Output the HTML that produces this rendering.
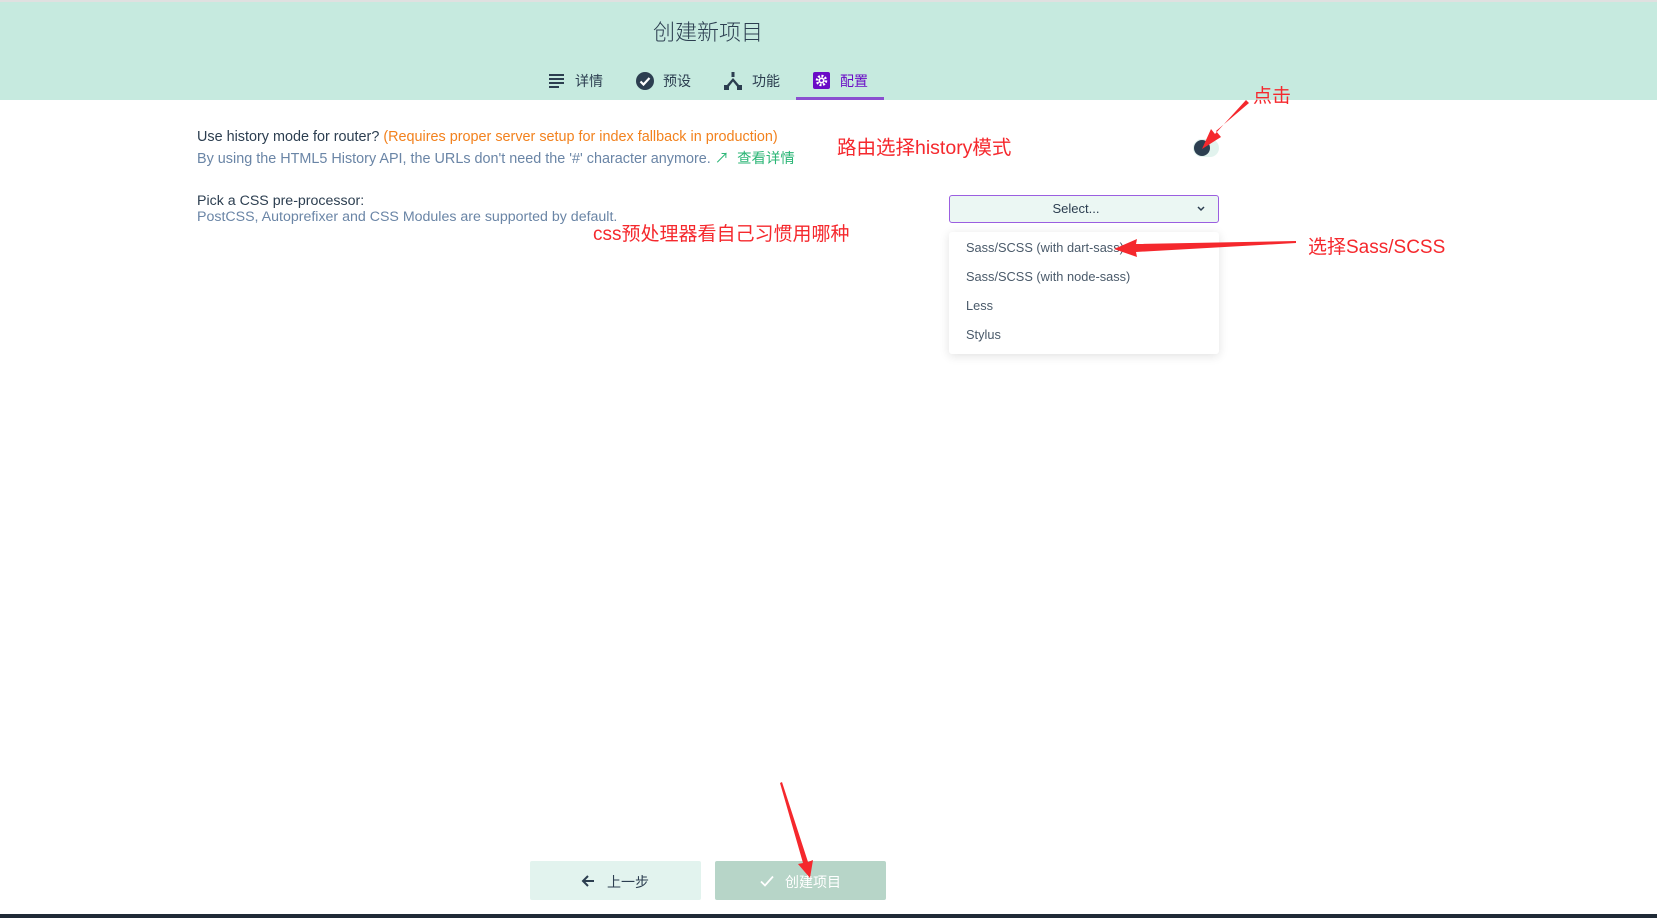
<!DOCTYPE html>
<html><head><meta charset="utf-8"><style>
*{margin:0;padding:0;box-sizing:border-box}
body{width:1657px;height:918px;position:relative;background:#fff;font-family:"Liberation Sans","Noto Sans CJK SC",sans-serif;overflow:hidden;color:#2c3e50}
.abs{position:absolute;white-space:nowrap}
#top{position:absolute;left:0;top:0;width:1657px;height:2px;background:#e0e0e0}
#hdr{position:absolute;left:0;top:2px;width:1657px;height:98px;background:#c6eadf}
.tab{position:absolute;top:72px;font-size:14px;color:#2c3e50;line-height:18px}
.red{color:#f5282d;font-size:19px;position:absolute;white-space:nowrap;line-height:22px}
</style></head><body>
<div id="top"></div>
<div id="hdr"></div>
<div class="abs" style="left:653px;top:15px;font-size:22px;color:#2c3e50;font-weight:300">创建新项目</div>

<svg class="abs" style="left:548px;top:73px" width="18" height="16" viewBox="0 0 18 16"><g fill="#2c3e50"><rect x="1" y="1" width="15" height="2"/><rect x="1" y="5" width="15" height="2"/><rect x="1" y="9" width="15" height="2"/><rect x="1" y="13" width="10" height="2"/></g></svg>
<div class="tab" style="left:575px">详情</div>
<svg class="abs" style="left:635px;top:71px" width="20" height="20" viewBox="0 0 20 20"><circle cx="10" cy="10" r="9" fill="#2c3e50"/><path d="M5.5 10.5l3 3 6-6.5" stroke="#fff" stroke-width="2.2" fill="none"/></svg>
<div class="tab" style="left:663px">预设</div>
<svg class="abs" style="left:723px;top:71px" width="20" height="20" viewBox="0 0 20 20"><g fill="#2c3e50"><rect x="8.5" y="1" width="3" height="5"/><path d="M10 7 L4 14 L6 15.5 L10 10.5 L14 15.5 L16 14 Z"/><rect x="1" y="14" width="5" height="5"/><rect x="14" y="14" width="5" height="5"/></g></svg>
<div class="tab" style="left:752px">功能</div>
<svg class="abs" style="left:813px;top:72px" width="17" height="17" viewBox="0 0 17 17"><rect width="17" height="17" rx="2" fill="#6a0bc6"/><circle cx="8.5" cy="8.5" r="4.5" fill="none" stroke="#fff" stroke-width="2.5" stroke-dasharray="2 1.5"/><circle cx="8.5" cy="8.5" r="3" fill="#fff"/><circle cx="8.5" cy="8.5" r="1.4" fill="#6a0bc6"/></svg>
<div class="tab" style="left:840px;color:#6a0bc6">配置</div>
<div class="abs" style="left:796px;top:97px;width:88px;height:3px;background:#8b4fd0"></div>

<div class="abs" style="left:197px;top:129px;font-size:14.4px;color:#2c3e50">Use history mode for router? <span style="color:#f2811d">(Requires proper server setup for index fallback in production)</span></div>
<div class="abs" style="left:197px;top:147px;font-size:14.4px;color:#6a85a6">By using the HTML5 History API, the URLs don't need the '#' character anymore. <span style="color:#2bb676">&#x2197;&#xFE0E;&nbsp; 查看详情</span></div>
<div class="abs" style="left:197px;top:193px;font-size:14.2px;color:#2c3e50">Pick a CSS pre-processor:</div>
<div class="abs" style="left:197px;top:209px;font-size:14.2px;color:#6a85a6">PostCSS, Autoprefixer and CSS Modules are supported by default.</div>

<div class="abs" style="left:1193px;top:139px;width:26px;height:18px;border-radius:9px;background:#e2f3ee"></div>
<div class="abs" style="left:1194px;top:140px;width:16px;height:16px;border-radius:50%;background:#2c3e50"></div>

<div class="abs" style="left:949px;top:195px;width:270px;height:28px;border:1.5px solid #9b5fe0;border-radius:3px;background:#ebf7f3;font-size:13px;text-align:center;line-height:25px;color:#2c3e50;padding-right:16px">Select...</div>
<svg class="abs" style="left:1196px;top:205px" width="10" height="8" viewBox="0 0 10 8"><path d="M2 2l3 3 3-3" stroke="#2c3e50" stroke-width="1.5" fill="none"/></svg>
<div class="abs" style="left:949px;top:232px;width:270px;height:122px;background:#fff;border-radius:3px;box-shadow:0 2px 10px rgba(0,0,0,.12)"></div>
<div class="abs" style="left:966px;top:240px;font-size:12.8px;color:#4a5a6a;line-height:16px">Sass/SCSS (with dart-sass)</div>
<div class="abs" style="left:966px;top:269px;font-size:12.8px;color:#4a5a6a;line-height:16px">Sass/SCSS (with node-sass)</div>
<div class="abs" style="left:966px;top:298px;font-size:12.8px;color:#4a5a6a;line-height:16px">Less</div>
<div class="abs" style="left:966px;top:327px;font-size:12.8px;color:#4a5a6a;line-height:16px">Stylus</div>

<div class="abs" style="left:530px;top:861px;width:171px;height:39px;background:#e2f3ee;border-radius:2px"></div>
<svg class="abs" style="left:580px;top:873px" width="16" height="16" viewBox="0 0 16 16"><path d="M14 8H3M8 3L3 8l5 5" stroke="#2c3e50" stroke-width="2" fill="none"/></svg>
<div class="abs" style="left:607px;top:872px;font-size:14px;color:#2c3e50">上一步</div>
<div class="abs" style="left:715px;top:861px;width:171px;height:39px;background:#b7d5c8;border-radius:2px"></div>
<svg class="abs" style="left:759px;top:873px" width="16" height="16" viewBox="0 0 16 16"><path d="M2 8.5l4 4 8-9" stroke="#fff" stroke-width="1.8" fill="none"/></svg>
<div class="abs" style="left:785px;top:872px;font-size:14px;color:#fff">创建项目</div>
<div class="abs" style="left:0;top:914px;width:1657px;height:4px;background:#1f2a36"></div>

<div class="red" style="left:837px;top:137px;font-size:19.5px">路由选择history模式</div>
<div class="red" style="left:593px;top:224px">css预处理器看自己习惯用哪种</div>
<div class="red" style="left:1253px;top:86px">点击</div>
<div class="red" style="left:1308px;top:237px">选择Sass/SCSS</div>

<svg class="abs" style="left:0;top:0" width="1657" height="918">
<g fill="#f5282d">
<path d="M1249 103 L1216 131 L1221 137 L1202 149 L1211 129 L1215 134 L1246 100Z"/>
<path d="M1296 241 L1136 244 L1137 239 L1114 249 L1137 257 L1136 252 L1296 243Z"/>
<path d="M780 783 L803 863 L798 864 L810 878 L813 860 L808 862 L782 782Z"/>
</g></svg>
</body></html>
